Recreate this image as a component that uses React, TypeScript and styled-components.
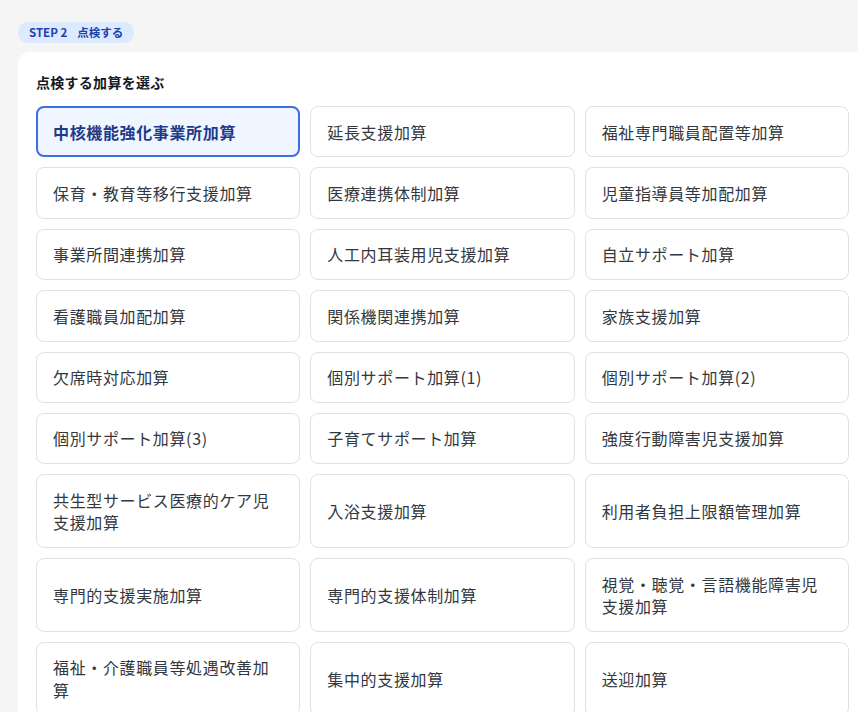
import React, { useState } from "react";
import styled, { createGlobalStyle } from "styled-components";

const Global = createGlobalStyle`
  html, body { margin: 0; padding: 0; background: #f5f5f5; overflow: hidden; }
  body { font-family: "Noto Sans CJK JP", "Noto Sans", sans-serif; color: #1f2937; }
`;

const Page = styled.div`
  padding: 22px 0 0 18px;
  display: flex;
  flex-direction: column;
  align-items: flex-start;
  gap: 9px;
`;

const Badge = styled.div`
  height: 21px;
  padding: 0 11px;
  display: flex;
  align-items: center;
  gap: 10px;
  border-radius: 999px;
  background: #dbeafe;
  color: #1e40af;
  font-size: 11.5px;
  font-weight: 700;
  line-height: 21px;
`;

const Card = styled.section`
  width: 813px;
  padding: 20px 18px 20px;
  background: #ffffff;
  border-radius: 12px;
`;

const Title = styled.h2`
  margin: 0 0 14px;
  font-size: 14px;
  line-height: 20px;
  font-weight: 700;
  letter-spacing: 0.02em;
  color: #111827;
`;

const Grid = styled.div`
  display: grid;
  grid-template-columns: repeat(3, 1fr);
  gap: 10px;
`;

const Option = styled.button<{ $selected?: boolean }>`
  box-sizing: border-box;
  display: flex;
  align-items: center;
  text-align: left;
  font-family: inherit;
  font-size: 16px;
  line-height: 1.4;
  letter-spacing: 0.04em;
  padding: ${(p) => (p.$selected ? "12.5px 15px" : "13.5px 16px")};
  border: ${(p) => (p.$selected ? "2px solid #3b6fe6" : "1px solid #dfe1e6")};
  border-radius: 8px;
  background: ${(p) => (p.$selected ? "#eff6ff" : "#ffffff")};
  color: ${(p) => (p.$selected ? "#1e3a8a" : "#333840")};
  font-weight: ${(p) => (p.$selected ? 700 : 400)};
  cursor: pointer;
`;

const items = [
  "中核機能強化事業所加算",
  "延長支援加算",
  "福祉専門職員配置等加算",
  "保育・教育等移行支援加算",
  "医療連携体制加算",
  "児童指導員等加配加算",
  "事業所間連携加算",
  "人工内耳装用児支援加算",
  "自立サポート加算",
  "看護職員加配加算",
  "関係機関連携加算",
  "家族支援加算",
  "欠席時対応加算",
  "個別サポート加算(1)",
  "個別サポート加算(2)",
  "個別サポート加算(3)",
  "子育てサポート加算",
  "強度行動障害児支援加算",
  "共生型サービス医療的ケア児支援加算",
  "入浴支援加算",
  "利用者負担上限額管理加算",
  "専門的支援実施加算",
  "専門的支援体制加算",
  "視覚・聴覚・言語機能障害児支援加算",
  "福祉・介護職員等処遇改善加算",
  "集中的支援加算",
  "送迎加算",
];

export default function App() {
  const [selected, setSelected] = useState(0);
  return (
    <>
      <Global />
      <Page>
        <Badge>
          <span>STEP 2</span>
          <span>点検する</span>
        </Badge>
        <Card>
          <Title>点検する加算を選ぶ</Title>
          <Grid>
            {items.map((label, i) => (
              <Option key={label} $selected={i === selected} onClick={() => setSelected(i)}>
                {label}
              </Option>
            ))}
          </Grid>
        </Card>
      </Page>
    </>
  );
}
